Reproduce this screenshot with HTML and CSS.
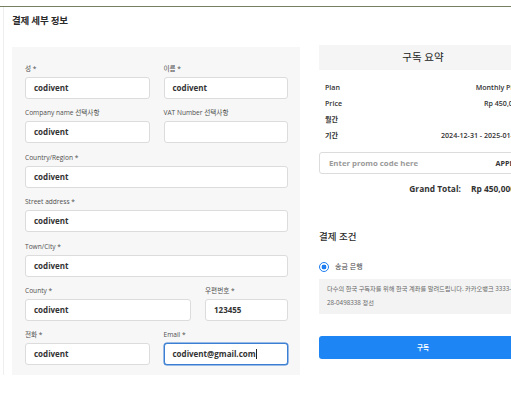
FILE: index.html
```html
<!DOCTYPE html>
<html lang="ko">
<head>
<meta charset="utf-8">
<title>결제 세부 정보</title>
<link rel="stylesheet" href="styles.css">
</head>
<body>
<div class="topbar"></div>
<div class="page">
  <h1 class="title">결제 세부 정보</h1>
  <div class="columns">
    <section class="billing">
      <div class="grid two">
        <div class="field"><label>성 *</label><div class="input">codivent</div></div>
        <div class="field"><label>이름 *</label><div class="input">codivent</div></div>
        <div class="field"><label>Company name 선택사항</label><div class="input">codivent</div></div>
        <div class="field"><label>VAT Number 선택사항</label><div class="input"></div></div>
        <div class="field wide"><label>Country/Region *</label><div class="input">codivent</div></div>
        <div class="field wide"><label>Street address *</label><div class="input">codivent</div></div>
        <div class="field wide"><label>Town/City *</label><div class="input">codivent</div></div>
        <div class="field wide">
          <div class="grid county">
            <div class="field"><label>County *</label><div class="input">codivent</div></div>
            <div class="field"><label>우편번호 *</label><div class="input">123455</div></div>
          </div>
        </div>
        <div class="field"><label>전화 *</label><div class="input">codivent</div></div>
        <div class="field"><label>Email *</label><div class="input focused">codivent@gmail.com<span class="caret"></span></div></div>
      </div>
    </section>
    <aside class="summary">
      <div class="summary-head">구독 요약</div>
      <div class="rows">
        <div class="row"><span>Plan</span><span>Monthly Plan</span></div>
        <div class="row"><span>Price</span><span>Rp 450,000</span></div>
        <div class="row"><span>월간</span><span></span></div>
        <div class="row"><span>기간</span><span>2024-12-31 - 2025-01-31</span></div>
      </div>
      <div class="promo"><span class="placeholder">Enter promo code here</span><span class="apply">APPLY</span></div>
      <div class="total"><span>Grand Total:</span><span>Rp 450,000</span></div>
      <h2 class="terms">결제 조건</h2>
      <div class="radio-row"><span class="radio"></span><span>송금 은행</span></div>
      <div class="info">다수의 한국 구독자를 위해 한국 계좌를 알려드립니다. 카카오뱅크 3333-<br>28-0498338 정선</div>
      <div class="button">구독</div>
    </aside>
  </div>
</div>
</body>
</html>
```
FILE: styles.css
```css
html, body {
  margin: 0;
  padding: 0;
  background: #fff;
  overflow: hidden;
}
body {
  font-family: "Open Sans", "Noto Sans CJK KR", sans-serif;
  color: #333;
}
.topbar {
  height: 6px;
  border-bottom: 1px solid #74805f;
}
.page {
  margin-left: 3px;
  border-left: 1px solid #efefef;
  padding: 7px 0 0 8px;
  width: 560px;
  height: 368px;
  box-sizing: border-box;
}
.title {
  margin: 0;
  font-size: 9.5px;
  line-height: 14px;
  font-weight: 600;
  color: #2b2b2b;
  letter-spacing: -0.2px;
}
.columns {
  display: flex;
  align-items: flex-start;
  gap: 19px;
  margin-top: 17px;
}
.billing {
  width: 288px;
  margin-top: 2px;
  background: #f7f7f7;
  padding: 17px 12px 15px 13px;
  box-sizing: border-box;
}
.grid {
  display: grid;
  column-gap: 14px;
  row-gap: 9.4px;
}
.grid.two {
  grid-template-columns: 1fr 1fr;
}
.grid.county {
  grid-template-columns: 2fr 1fr;
}
.field.wide {
  grid-column: 1 / -1;
}
.field label {
  display: block;
  font-size: 6.6px;
  line-height: 10px;
  color: #4f4f4f;
  margin-bottom: 3px;
  white-space: nowrap;
}
.input {
  height: 22px;
  box-sizing: border-box;
  background: #fff;
  border: 1px solid #dcdcdc;
  border-radius: 3px;
  padding-left: 8px;
  font-size: 8px;
  font-weight: 700;
  line-height: 20px;
  color: #333;
  display: flex;
  align-items: center;
}
.input.focused {
  border-color: #3b7fd4;
  box-shadow: 0 0 0 0.5px #3b7fd4;
}
.caret {
  display: inline-block;
  width: 1px;
  height: 10px;
  background: #222;
}
.summary {
  width: 208px;
  flex-shrink: 0;
}
.summary-head {
  height: 25px;
  background: #f5f5f5;
  text-align: center;
  font-size: 10.5px;
  line-height: 25px;
  color: #222;
}
.rows {
  padding-top: 9px;
}
.row {
  display: flex;
  justify-content: space-between;
  padding: 0 6px;
  font-size: 7.1px;
  line-height: 16px;
  font-weight: 600;
  color: #333;
}
.promo {
  margin-top: 9px;
  height: 22px;
  box-sizing: border-box;
  border: 1px solid #dcdcdc;
  border-radius: 3px;
  display: flex;
  align-items: center;
  justify-content: space-between;
  padding: 0 8px 0 9px;
  font-size: 7.8px;
  font-weight: 700;
}
.placeholder {
  color: #9a9a9a;
}
.apply {
  color: #333;
  font-size: 7.2px;
}
.total {
  margin-top: 8px;
  display: flex;
  justify-content: flex-end;
  gap: 10px;
  padding-right: 12px;
  font-size: 8.4px;
  line-height: 14px;
  font-weight: 700;
  color: #333;
}
.terms {
  margin: 33px 0 0;
  font-size: 9.5px;
  line-height: 16px;
  font-weight: 500;
  color: #2b2b2b;
}
.radio-row {
  margin-top: 15px;
  display: flex;
  align-items: center;
  gap: 6px;
  font-size: 7px;
  line-height: 14px;
  color: #444;
}
.radio {
  width: 10px;
  height: 10px;
  box-sizing: border-box;
  border: 1.5px solid #1f7ef0;
  border-radius: 50%;
  background: radial-gradient(circle, #1f7ef0 0 2.4px, #fff 2.6px);
}
.info {
  margin-top: 5px;
  background: #f3f3f3;
  padding: 3px 8px 5px;
  font-size: 6.2px;
  line-height: 13.5px;
  color: #666;
  white-space: nowrap;
}
.button {
  margin-top: 22px;
  height: 23px;
  border-radius: 3px;
  background: #1d86f4;
  color: #fff;
  text-align: center;
  font-size: 6.5px;
  font-weight: 700;
  line-height: 23px;
}
```
